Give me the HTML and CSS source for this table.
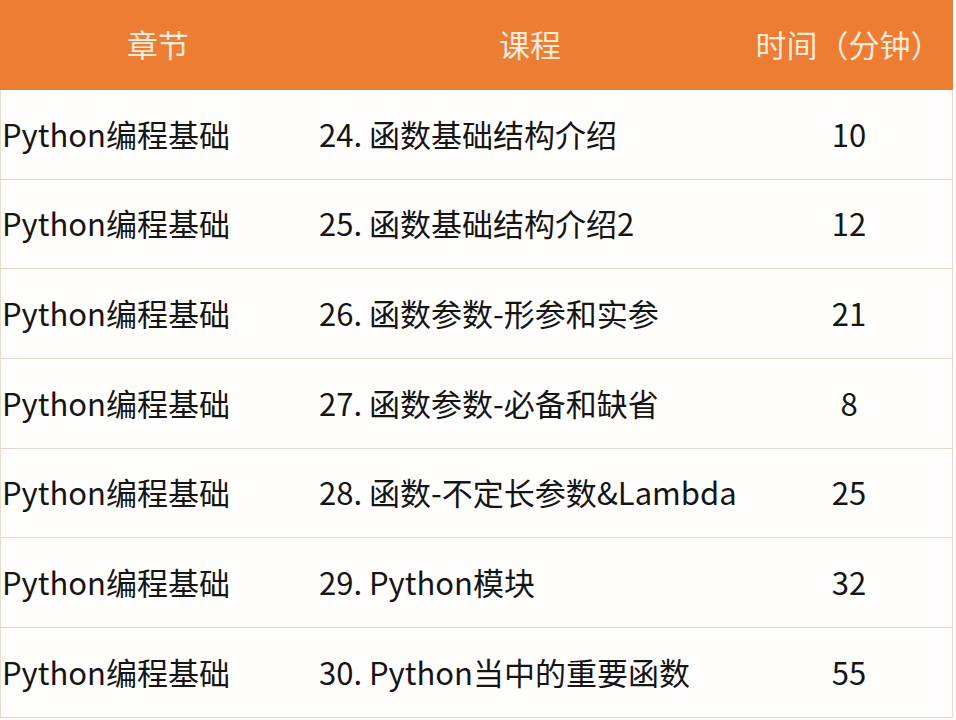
FILE: index.html
```html
<!DOCTYPE html>
<html lang="zh">
<head>
<meta charset="utf-8">
<link rel="stylesheet" href="styles.css">
</head>
<body>
<div class="table">
  <div class="row head">
    <div class="cell c1">章节</div>
    <div class="cell c2">课程</div>
    <div class="cell c3">时间（分钟）</div>
  </div>
  <div class="row">
    <div class="cell c1">Python编程基础</div>
    <div class="cell c2">24. 函数基础结构介绍</div>
    <div class="cell c3">10</div>
  </div>
  <div class="row">
    <div class="cell c1">Python编程基础</div>
    <div class="cell c2">25. 函数基础结构介绍2</div>
    <div class="cell c3">12</div>
  </div>
  <div class="row">
    <div class="cell c1">Python编程基础</div>
    <div class="cell c2">26. 函数参数-形参和实参</div>
    <div class="cell c3">21</div>
  </div>
  <div class="row">
    <div class="cell c1">Python编程基础</div>
    <div class="cell c2">27. 函数参数-必备和缺省</div>
    <div class="cell c3">8</div>
  </div>
  <div class="row">
    <div class="cell c1">Python编程基础</div>
    <div class="cell c2">28. 函数-不定长参数&amp;Lambda</div>
    <div class="cell c3">25</div>
  </div>
  <div class="row">
    <div class="cell c1">Python编程基础</div>
    <div class="cell c2">29. Python模块</div>
    <div class="cell c3">32</div>
  </div>
  <div class="row">
    <div class="cell c1">Python编程基础</div>
    <div class="cell c2">30. Python当中的重要函数</div>
    <div class="cell c3">55</div>
  </div>
</div>
</body>
</html>
```
FILE: styles.css
```css
html, body {
  margin: 0;
  padding: 0;
  background: #ffffff;
}
body {
  width: 956px;
  height: 720px;
  overflow: hidden;
  font-family: "Noto Sans CJK SC", "Noto Sans", sans-serif;
  color: #151515;
}
.table {
  width: 953px;
  border-left: 1px solid #eadccd;
  border-right: 1px solid #eadccd;
  box-sizing: border-box;
  background: #fffefc;
}
.row {
  display: grid;
  grid-template-columns: 315px 428px 1fr;
  height: 89.67px;
  box-sizing: border-box;
  border-bottom: 1px solid #e5d6c6;
  align-items: center;
  font-size: 31px;
}
.row.head {
  background: #ed7d32;
  color: #fdeadb;
  font-size: 31px;
  border-bottom: none;
  height: 90px;
  margin-left: -1px;
  margin-right: -1px;
  grid-template-columns: 316px 428px 1fr;
  padding-bottom: 2px;
}
.cell {
  white-space: nowrap;
  padding-bottom: 2px;
}
.c1 {
  padding-left: 1px;
}
.c2 {
  padding-left: 3px;
}
.c3 {
  text-align: center;
  padding-left: 2px;
}
.head .c1,
.head .c2 {
  text-align: center;
  padding-left: 0;
}
.head .c3 {
  padding-left: 0;
  padding-right: 0;
}
```
